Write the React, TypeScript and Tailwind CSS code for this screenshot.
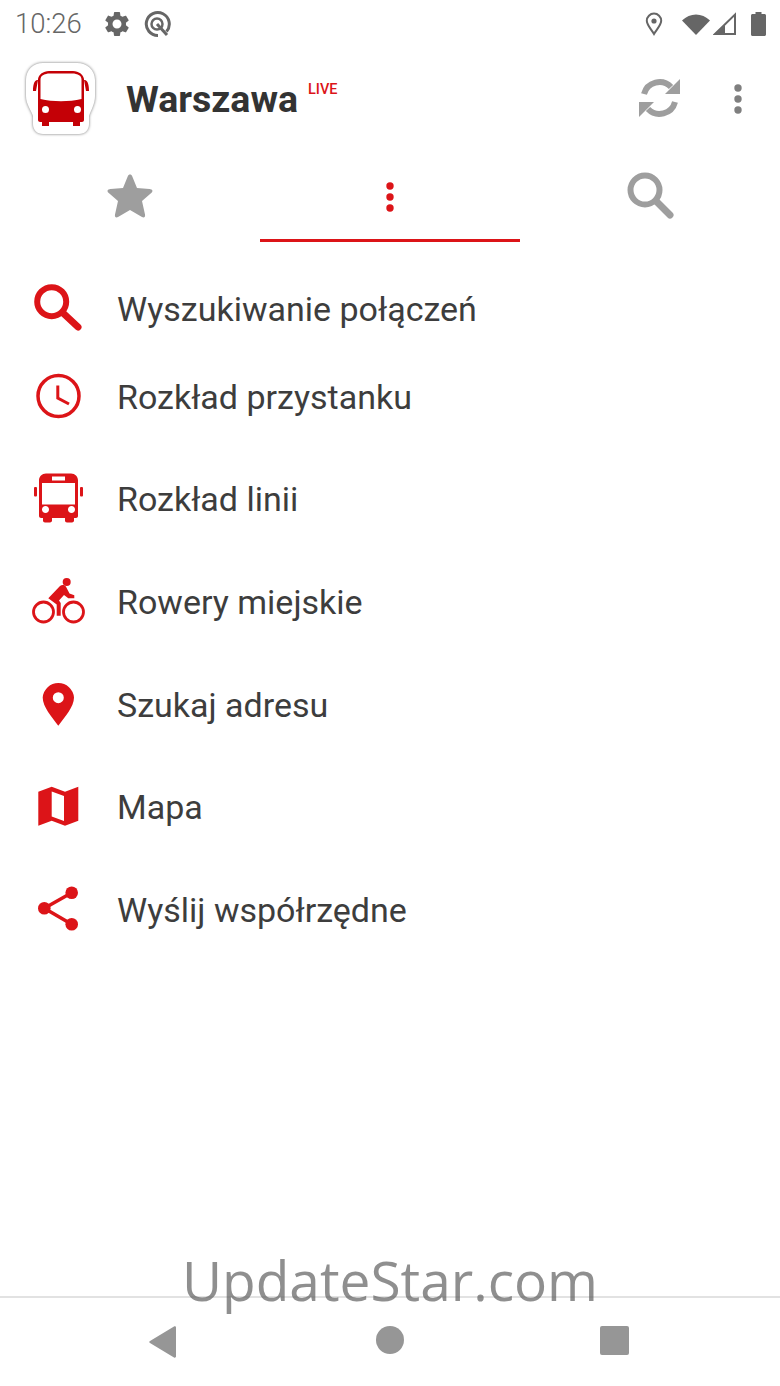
import React from "react";

const RED = "#dc1418";

function SearchIcon({ color }: { color: string }) {
  return (
    <svg width="60" height="60" viewBox="0 0 60 60" fill="none" className="shrink-0">
      <circle cx="23.7" cy="22.7" r="14.5" stroke={color} strokeWidth="6" />
      <path d="M35 34L50 48" stroke={color} strokeWidth="7" strokeLinecap="round" />
    </svg>
  );
}

function ClockIcon() {
  return (
    <svg width="60" height="60" viewBox="0 0 60 60" fill="none" className="shrink-0">
      <circle cx="30.5" cy="29" r="20.5" stroke={RED} strokeWidth="3.5" />
      <path d="M29.8 18.5V31L41 37" stroke={RED} strokeWidth="3" />
    </svg>
  );
}

function BusIcon() {
  return (
    <svg width="60" height="60" viewBox="0 0 60 60" fill="none" className="shrink-0">
      <path
        fillRule="evenodd"
        clipRule="evenodd"
        fill={RED}
        d="M18 4.5H43C47 4.5 50 7.5 50 11.5V47C50 48 49 49 48 49H46V51.5C46 52.7 45 53.5 44 53.5H39C37.8 53.5 37 52.7 37 51.5V49H24V51.5C24 52.7 23 53.5 22 53.5H17C15.8 53.5 15 52.7 15 51.5V49H13C12 49 11 48 11 47V11.5C11 7.5 14 4.5 18 4.5ZM24 7.5V11.5H37V7.5ZM14 14V35.5H47V14ZM17.5 37C15.5 37 14 38.5 14 40.5S15.5 44 17.5 44 21 42.5 21 40.5 19.5 37 17.5 37ZM43.5 37C41.5 37 40 38.5 40 40.5S41.5 44 43.5 44 47 42.5 47 40.5 45.5 37 43.5 37Z"
      />
      <rect x="6" y="18" width="3" height="9.5" rx="1" fill={RED} />
      <rect x="52" y="18" width="3" height="9.5" rx="1" fill={RED} />
    </svg>
  );
}

function BikeIcon() {
  return (
    <svg width="60" height="60" viewBox="0 0 60 60" fill="none" className="shrink-0">
      <circle cx="15.5" cy="40" r="10" stroke={RED} strokeWidth="2.8" />
      <circle cx="45.5" cy="40" r="10" stroke={RED} strokeWidth="2.8" />
      <circle cx="38.7" cy="10" r="4" fill={RED} />
      <path
        fill={RED}
        d="M20.3 26.3L32 14C34 12.5 37 13 38 14.7L41.5 21.5L46.3 23.3V26.3H40.3L36 23L31 28.5L32.7 31V43.7H28.7V32.5Z"
      />
    </svg>
  );
}

function PinIcon() {
  return (
    <svg width="60" height="60" viewBox="0 0 60 60" fill="none" className="shrink-0">
      <path
        fillRule="evenodd"
        clipRule="evenodd"
        fill={RED}
        d="M30.3 50.7C24 42 14.7 32 14.7 22.5A15.7 15.7 0 0 1 46 22.5C46 32 36.6 42 30.3 50.7ZM30.3 17.2A5.5 5.5 0 1 0 30.3 28.2A5.5 5.5 0 1 0 30.3 17.2Z"
      />
    </svg>
  );
}

function MapIcon() {
  return (
    <svg width="60" height="60" viewBox="0 0 60 60" fill="none" className="shrink-0">
      <path
        fillRule="evenodd"
        clipRule="evenodd"
        fill={RED}
        d="M10.3 14.7L23.7 9.7L37 14.7L50.3 9.7V43.7L37 48.7L23.7 43.7L10.3 48.7ZM23.7 14.5V39.5L36 44V19Z"
      />
    </svg>
  );
}

function ShareIcon() {
  return (
    <svg width="60" height="60" viewBox="0 0 60 60" fill="none" className="shrink-0">
      <path d="M43.7 12.7L16.3 28.3L43.7 44.3" stroke={RED} strokeWidth="3.5" />
      <circle cx="16.3" cy="28.3" r="6.3" fill={RED} />
      <circle cx="43.7" cy="12.7" r="6.3" fill={RED} />
      <circle cx="43.7" cy="44.3" r="6.3" fill={RED} />
    </svg>
  );
}

function Dots({ color }: { color: string }) {
  return (
    <svg width="10" height="30" viewBox="0 0 10 30" fill={color}>
      <circle cx="5" cy="4" r="3.7" />
      <circle cx="5" cy="15" r="3.7" />
      <circle cx="5" cy="26" r="3.7" />
    </svg>
  );
}

const rows: { label: string; icon: React.ReactNode; h: string }[] = [
  { label: "Wyszukiwanie połączeń", icon: <SearchIcon color={RED} />, h: "h-[74px]" },
  { label: "Rozkład przystanku", icon: <ClockIcon />, h: "h-[102px]" },
  { label: "Rozkład linii", icon: <BusIcon />, h: "h-[102px]" },
  { label: "Rowery miejskie", icon: <BikeIcon />, h: "h-[103px]" },
  { label: "Szukaj adresu", icon: <PinIcon />, h: "h-[103px]" },
  { label: "Mapa", icon: <MapIcon />, h: "h-[102px]" },
  { label: "Wyślij współrzędne", icon: <ShareIcon />, h: "h-[103px]" },
];

export default function App() {
  return (
    <div className="relative flex h-[1386px] w-[780px] flex-col overflow-hidden bg-white font-['Roboto',sans-serif]">
      {/* status bar */}
      <div className="flex h-[47px] shrink-0 items-center pl-[15px] pr-[14px] text-[#666666]">
        <span className="text-[27.5px] font-light leading-none">10:26</span>
        <svg width="30" height="30" viewBox="0 0 24 24" fill="#666666" className="ml-[20px]">
          <path d="M19.14 12.94c.04-.3.06-.61.06-.94 0-.32-.02-.64-.07-.94l2.03-1.58c.18-.14.23-.41.12-.61l-1.92-3.32c-.12-.22-.37-.29-.59-.22l-2.39.96c-.5-.38-1.03-.7-1.62-.94l-.36-2.54c-.04-.24-.24-.41-.48-.41h-3.84c-.24 0-.43.17-.47.41l-.36 2.54c-.59.24-1.13.57-1.62.94l-2.39-.96c-.22-.08-.47 0-.59.22L2.74 8.87c-.12.21-.08.47.12.61l2.03 1.58c-.05.3-.09.63-.09.94s.02.64.07.94l-2.03 1.58c-.18.14-.23.41-.12.61l1.92 3.32c.12.22.37.29.59.22l2.39-.96c.5.38 1.03.7 1.62.94l.36 2.54c.05.24.24.41.48.41h3.84c.24 0 .44-.17.47-.41l.36-2.54c.59-.24 1.13-.56 1.62-.94l2.39.96c.22.08.47 0 .59-.22l1.92-3.32c.12-.22.07-.47-.12-.61l-2.01-1.58zM12 15.6c-1.98 0-3.6-1.62-3.6-3.6s1.62-3.6 3.6-3.6 3.6 1.62 3.6 3.6-1.62 3.6-3.6 3.6z" />
        </svg>
        <svg width="28" height="28" viewBox="0 0 28 28" fill="none" className="ml-[11px]">
          <path d="M23.5 21.5A11.5 11.5 0 1 0 15 25.5" stroke="#666666" strokeWidth="3" />
          <circle cx="14" cy="14" r="5.5" stroke="#666666" strokeWidth="2.5" />
          <path d="M14 14L24 25" stroke="#666666" strokeWidth="3" />
        </svg>
        <svg width="22" height="24" viewBox="0 0 22 24" fill="none" className="ml-auto mr-[17px]">
          <path d="M11 22C8 17 3.8 13 3.8 8.8A7.2 7.2 0 0 1 18.2 8.8C18.2 13 14 17 11 22Z" stroke="#666666" strokeWidth="2" />
          <circle cx="11" cy="9" r="2.6" fill="#666666" />
        </svg>
        <svg width="28" height="24" viewBox="0 0 28 24" fill="#666666">
          <path d="M0 8.5C8 0.5 20 0.5 28 8.5L14 23Z" />
        </svg>
        <svg width="24" height="24" viewBox="0 0 24 24" fill="none" className="ml-[3px]">
          <path d="M22 2.5V22H2Z" fill="#ffffff" stroke="#666666" strokeWidth="2" />
          <path d="M12 13L12 23H1.5Z" fill="#666666" />
        </svg>
        <svg width="15" height="24" viewBox="0 0 15 24" fill="#666666" className="ml-[14px]">
          <path d="M4.5 0H10.5V2H13.5C14.3 2 15 2.7 15 3.5V22.5C15 23.3 14.3 24 13.5 24H1.5C0.7 24 0 23.3 0 22.5V3.5C0 2.7 0.7 2 1.5 2H4.5Z" />
        </svg>
      </div>

      {/* toolbar */}
      <div className="flex h-[103px] shrink-0 items-center pl-[25px]">
        <svg width="72" height="74" viewBox="0 0 72 74" className="shrink-0 drop-shadow-[0_0_1.5px_rgba(0,0,0,0.55)]">
          <path d="M18 1H52C62 1 70 8 70 18V34C70 42 66 48 64 54V62C64 68 60 72 54 72H18C12 72 8 68 8 62V54C6 48 1 42 1 34V18C1 8 8 1 18 1Z" fill="#ffffff" />
          <path
            fill="#c40006"
            fillRule="evenodd"
            clipRule="evenodd"
            d="M13 17C14 12 18 9.5 24 9H48C54 9.5 58 12 59 17V58C59 59 58 60 57 60H55V64H48V60H24V64H17V60H15C14 60 13 59 13 58ZM17.5 13.5C16 14.5 15.5 16 15.5 18V37C28 40 44 40 56.5 37V18C56.5 16 56 14.5 54.5 13.5C52 12 50 11.5 47 11.5H25C22 11.5 20 12 17.5 13.5ZM20.5 44A3.5 3.5 0 1 0 20.5 51A3.5 3.5 0 1 0 20.5 44ZM52.5 44A3.5 3.5 0 1 0 52.5 51A3.5 3.5 0 1 0 52.5 44Z"
          />
          <path d="M12 18C9 19 8 23 8 29H11L13 18ZM60 18C63 19 64 23 64 29H61L59 18Z" fill="#c40006" />
        </svg>
        <span className="ml-[29px] mt-[2px] text-[37.5px] font-bold leading-none text-[#333333]">Warszawa</span>
        <span className="mb-[17px] ml-[10px] self-center text-[14.5px] font-medium leading-none text-[#dc1418]">LIVE</span>
        <svg width="42" height="42" viewBox="0 0 42 42" fill="none" className="ml-auto">
          <path d="M5 16A16 16 0 0 1 32 9" stroke="#9e9e9e" strokeWidth="6" />
          <path d="M36 24A16 16 0 0 1 9 31" stroke="#9e9e9e" strokeWidth="6" />
          <path d="M41 1V16H26Z" fill="#9e9e9e" />
          <path d="M0 39V24H15Z" fill="#9e9e9e" />
        </svg>
        <div className="ml-[52px] mr-[37px] flex">
          <Dots color="#7f7f7f" />
        </div>
      </div>

      {/* tabs */}
      <div className="grid h-[92px] shrink-0 grid-cols-3">
        <div className="flex items-center justify-center">
          <svg width="48" height="46" viewBox="0 0 48 46" fill="#9e9e9e">
            <path d="M24 1.5C25 1.5 25.8 2.2 26.2 3.2L31 15L43.5 16C46.5 16.3 47.3 18 45.5 19.8L36 28L39 41.5C39.5 44 38 45 36 44L24 37L12 44C10 45 8.5 44 9 41.5L12 28L2.5 19.8C0.7 18 1.5 16.3 4.5 16L17 15L21.8 3.2C22.2 2.2 23 1.5 24 1.5Z" />
          </svg>
        </div>
        <div className="flex items-center justify-center border-b-[3px] border-[#dc1418] pt-[5px]">
          <Dots color={RED} />
        </div>
        <div className="flex items-center justify-center pb-[3px]">
          <svg width="48" height="48" viewBox="0 0 48 48" fill="none">
            <circle cx="19" cy="19" r="14.5" stroke="#9e9e9e" strokeWidth="6" />
            <path d="M30 30L44 44" stroke="#9e9e9e" strokeWidth="7" strokeLinecap="round" />
          </svg>
        </div>
      </div>

      {/* menu */}
      <div className="flex flex-col pt-[30px]">
        {rows.map((r) => (
          <div key={r.label} className={`flex items-center pl-[28px] ${r.h}`}>
            {r.icon}
            <span className="ml-[29px] text-[34px] leading-none text-[#3d3d3d]">{r.label}</span>
          </div>
        ))}
      </div>

      {/* nav bar */}
      <div className="mt-auto flex h-[90px] shrink-0 items-center border-t-2 border-[#e2e2e2]">
        <div className="grid w-full grid-cols-3">
          <div className="flex justify-center pl-[66px]">
            <svg width="28" height="32" viewBox="0 0 28 32" fill="#969696">
              <path d="M27 1.5V30.5C27 31.5 26 32 25 31.5L1 17C0 16.5 0 15.5 1 15L25 0.5C26 0 27 0.5 27 1.5Z" />
            </svg>
          </div>
          <div className="flex justify-center">
            <div className="h-[28px] w-[28px] rounded-full bg-[#969696]" />
          </div>
          <div className="flex justify-center pr-[72px]">
            <div className="h-[29px] w-[29px] rounded-[2px] bg-[#969696]" />
          </div>
        </div>
      </div>

      {/* watermark */}
      <div className="absolute left-0 right-0 top-[1242px] text-center font-['Open_Sans',sans-serif] text-[55px] font-normal leading-[76px] text-[#606060]/70">
        UpdateStar.com
      </div>
    </div>
  );
}
